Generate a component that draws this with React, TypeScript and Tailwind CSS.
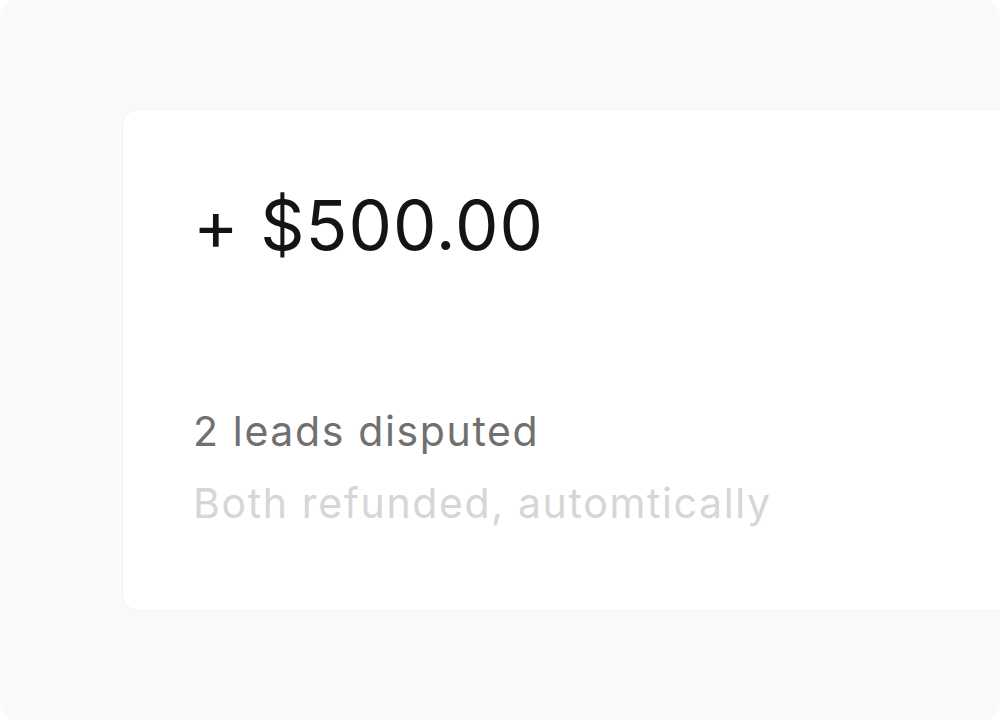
export default function App() {
  return (
    <div className="h-[720px] w-[1000px] bg-white" style={{ fontFamily: 'Inter, "Liberation Sans", sans-serif' }}>
      <div className="h-full w-full overflow-hidden rounded-2xl bg-[#f9f9f9] pl-[122px] pt-[109px]">
        <div className="flex h-[502px] w-[1000px] flex-col rounded-2xl border border-[#f1f1f1] bg-white pl-[70px] pt-[81px]">
          <div className="text-[69px] leading-none tracking-[0.015em] text-[#141414]">+ $500.00</div>
          <div className="mt-[151px] text-[41px] leading-none tracking-[0.04em] text-[#707070]">2 leads disputed</div>
          <div className="mt-[31px] text-[41px] leading-none tracking-[0.04em] text-[#d6d6d6]">Both refunded, automtically</div>
        </div>
      </div>
    </div>
  );
}
